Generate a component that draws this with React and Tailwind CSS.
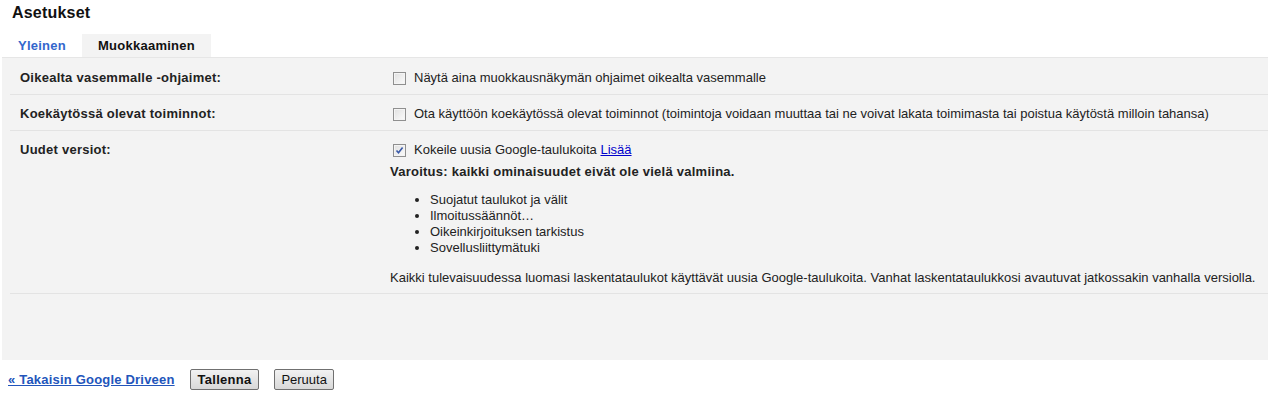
import React from 'react'

const Checkbox = ({ checked }) => (
  <span className="inline-flex h-[13px] w-[13px] shrink-0 items-center justify-center border border-[#8f8f8f] bg-gradient-to-br from-[#dcdcdc] to-[#fbfbfb] ml-[3px] mr-[8px]">
    <span className="flex h-[11px] w-[11px] items-center justify-center border border-[#f4f4f4] bg-gradient-to-br from-[#e2e2e2] to-[#f9f9f9]">
      {checked ? (
        <svg viewBox="0 0 9 9" className="h-[9px] w-[9px]" aria-hidden="true">
          <path d="M1.5 4.5 3.5 6.8 7.6 1.4" fill="none" stroke="#3a5aa8" strokeWidth="1.6" />
        </svg>
      ) : null}
    </span>
  </span>
)

function SettingRow({ label, children, bottom = 'pb-[8px]' }) {
  return (
    <div className={`grid grid-cols-[380px_1fr] border-b border-[#e3e3e3] pt-[11px] ${bottom}`}>
      <div className="pl-[10px] font-bold leading-[16px] tracking-[0.25px]">{label}</div>
      <div>{children}</div>
    </div>
  )
}

const CheckLine = ({ checked, children }) => (
  <div className="flex items-center leading-[16px]">
    <Checkbox checked={checked} />
    <span>{children}</span>
  </div>
)

export default function App() {
  return (
    <div className="h-[397px] w-[1268px] bg-white font-['Liberation_Sans',Arial,sans-serif] text-[13px] text-[#222]">
      <h1 className="h-[34px] pl-3 pt-[3px] text-[16px] font-bold leading-[20px] tracking-[0.2px] text-[#111]">Asetukset</h1>

      {/* tabs */}
      <div className="flex h-[23px] pl-[2px] font-bold tracking-[0.25px]">
        <div className="flex items-center px-4 text-[#3366cc]">Yleinen</div>
        <div className="flex items-center bg-[#f3f3f3] px-4 text-[#111]">Muokkaaminen</div>
      </div>

      <div className="ml-[2px] h-[303px] border-t border-[#e6e6e6] bg-[#f3f3f3] pt-[1px]">
        <div className="ml-2">
          <SettingRow label="Oikealta vasemmalle -ohjaimet:">
            <CheckLine>Näytä aina muokkausnäkymän ohjaimet oikealta vasemmalle</CheckLine>
          </SettingRow>
          <SettingRow label="Koekäytössä olevat toiminnot:">
            <CheckLine>
              Ota käyttöön koekäytössä olevat toiminnot (toimintoja voidaan muuttaa tai ne voivat lakata toimimasta tai
              poistua käytöstä milloin tahansa)
            </CheckLine>
          </SettingRow>
          <SettingRow label="Uudet versiot:" bottom="pb-[7px]">
            <CheckLine checked>
              Kokeile uusia Google-taulukoita{' '}
              <a href="#" className="text-[#0000cc] underline">
                Lisää
              </a>
            </CheckLine>
            <p className="mt-[6px] font-bold leading-[16px] tracking-[0.25px]">
              Varoitus: kaikki ominaisuudet eivät ole vielä valmiina.
            </p>
            <ul className="mt-[12px] list-disc pl-[40px] leading-[16px]">
              <li>Suojatut taulukot ja välit</li>
              <li>Ilmoitussäännöt…</li>
              <li>Oikeinkirjoituksen tarkistus</li>
              <li>Sovellusliittymätuki</li>
            </ul>
            <p className="mt-[14px] leading-[16px]">
              Kaikki tulevaisuudessa luomasi laskentataulukot käyttävät uusia Google-taulukoita. Vanhat
              laskentataulukkosi avautuvat jatkossakin vanhalla versiolla.
            </p>
          </SettingRow>
        </div>
      </div>

      <div className="flex items-center pl-2 pt-[9px]">
        <a href="#" className="font-bold tracking-[0.2px] text-[#2255bb] underline">
          « Takaisin Google Driveen
        </a>
        <button
          type="button"
          className="ml-[15px] h-[21px] rounded-[2px] border border-[#707070] bg-gradient-to-b from-[#f2f2f2] to-[#d8d8d8] px-[7px] text-[13px] font-bold leading-[15px] tracking-[0.25px] text-[#111]"
        >
          Tallenna
        </button>
        <button
          type="button"
          className="ml-[15px] h-[21px] rounded-[2px] border border-[#707070] bg-gradient-to-b from-[#f2f2f2] to-[#d8d8d8] px-[6px] text-[13px] leading-[15px] text-[#111]"
        >
          Peruuta
        </button>
      </div>
    </div>
  )
}
